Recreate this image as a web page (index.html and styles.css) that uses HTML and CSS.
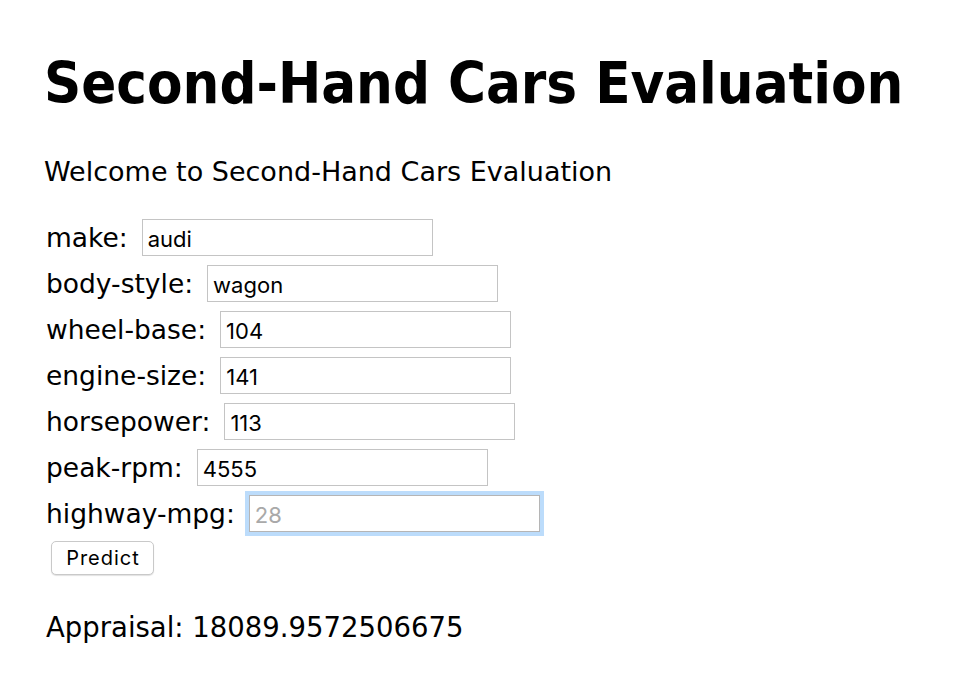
FILE: index.html
```html
<!DOCTYPE html>
<html>
<head>
<meta charset="utf-8">
<title>Second-Hand Cars Evaluation</title>
<link rel="stylesheet" href="styles.css">
</head>
<body>
<div class="page">
  <h1 class="title">Second-Hand Cars Evaluation</h1>
  <p class="welcome">Welcome to Second-Hand Cars Evaluation</p>
  <form class="form">
    <div class="row"><label class="label">make:</label><input class="field" type="text" value="audi"></div>
    <div class="row"><label class="label">body-style:</label><input class="field" type="text" value="wagon"></div>
    <div class="row"><label class="label">wheel-base:</label><input class="field" type="text" value="104"></div>
    <div class="row"><label class="label">engine-size:</label><input class="field" type="text" value="141"></div>
    <div class="row"><label class="label">horsepower:</label><input class="field" type="text" value="113"></div>
    <div class="row"><label class="label">peak-rpm:</label><input class="field" type="text" value="4555"></div>
    <div class="row"><label class="label">highway-mpg:</label><input class="field focused" type="text" placeholder="28"></div>
    <div class="actions"><button class="btn" type="button">Predict</button></div>
  </form>
  <p class="result">Appraisal: 18089.9572506675</p>
</div>
</body>
</html>
```
FILE: styles.css
```css
html, body {
  margin: 0;
  padding: 0;
  background: #fff;
}
.page {
  padding: 0 0 0 44px;
  color: #000;
  font-family: "DejaVu Sans", sans-serif;
}
.title {
  margin: 0;
  padding-top: 44px;
  font-family: "DejaVu Sans Condensed", "DejaVu Sans", sans-serif;
  font-size: 57.5px;
  line-height: 80px;
  font-weight: bold;
}
.welcome {
  margin: 0;
  padding-top: 30px;
  font-size: 27px;
  line-height: 36px;
}
.form {
  display: flex;
  flex-direction: column;
  gap: 9px;
  margin-top: 29px;
}
.row {
  display: flex;
  align-items: center;
  gap: 14px;
  height: 37px;
}
.label {
  font-size: 26.5px;
  padding-left: 2px;
}
.field {
  box-sizing: border-box;
  width: 291px;
  height: 37px;
  margin: 0;
  border: 1px solid #c4c4c4;
  border-radius: 0;
  padding: 2px 5px 0;
  font-family: Inter, "Liberation Sans", sans-serif;
  font-size: 22px;
  color: #000;
  outline: none;
}
.field::placeholder {
  color: #a9a9a9;
}
.focused {
  box-shadow: 0 0 0 4px #bcdcfb;
  border-color: #b5b5b5;
}
.actions {
  display: flex;
  padding-left: 7px;
}
.btn {
  box-sizing: border-box;
  width: 103px;
  height: 34px;
  margin: 0;
  border: 1px solid #c9c9c9;
  border-radius: 5px;
  background: #fff;
  box-shadow: 0 1px 1px rgba(0,0,0,0.12);
  font-family: Inter, "Liberation Sans", sans-serif;
  font-size: 20px;
  letter-spacing: 1px;
  color: #000;
  padding: 0 0 0 1px;
}
.result {
  margin: 0;
  padding: 34px 0 0 2px;
  font-size: 27.5px;
  line-height: 36px;
}
```
